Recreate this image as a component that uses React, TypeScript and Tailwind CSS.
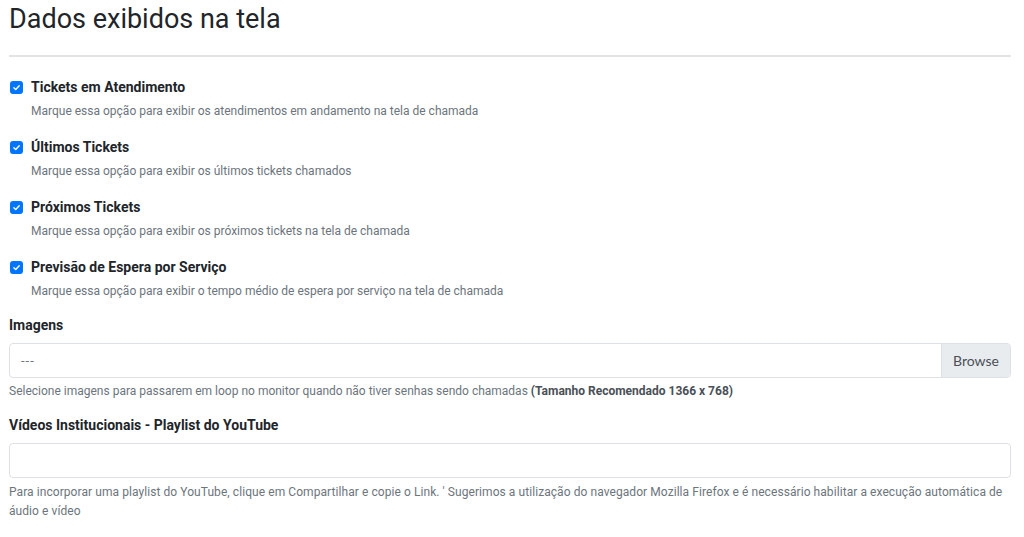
import { useState } from "react";

const opcoes = [
  {
    id: "atendimento",
    label: "Tickets em Atendimento",
    help: "Marque essa opção para exibir os atendimentos em andamento na tela de chamada",
  },
  {
    id: "ultimos",
    label: "Últimos Tickets",
    help: "Marque essa opção para exibir os últimos tickets chamados",
  },
  {
    id: "proximos",
    label: "Próximos Tickets",
    help: "Marque essa opção para exibir os próximos tickets na tela de chamada",
  },
  {
    id: "previsao",
    label: "Previsão de Espera por Serviço",
    help: "Marque essa opção para exibir o tempo médio de espera por serviço na tela de chamada",
  },
];

function Check({ checked, onChange }: { checked: boolean; onChange: () => void }) {
  return (
    <button
      type="button"
      onClick={onChange}
      className={`flex h-[13px] w-[13px] shrink-0 items-center justify-center rounded-[3px] ${
        checked ? "bg-[#0075ff]" : "border border-gray-400 bg-white"
      }`}
    >
      {checked && (
        <svg viewBox="0 0 12 12" className="h-[9px] w-[9px]">
          <path d="M2.5 6.2 L5 8.6 L9.6 3.6" fill="none" stroke="white" strokeWidth="1.9" strokeLinecap="round" strokeLinejoin="round" />
        </svg>
      )}
    </button>
  );
}

export default function App() {
  const [marcados, setMarcados] = useState<Record<string, boolean>>({
    atendimento: true,
    ultimos: true,
    proximos: true,
    previsao: true,
  });
  const [playlist, setPlaylist] = useState("");

  return (
    <div className="min-h-[537px] bg-white pl-[9px] pr-[13px] text-[#212529]" style={{ fontFamily: "Roboto, sans-serif" }}>
      <h1 className="pt-[3px] text-[27px] font-normal leading-[33px]">Dados exibidos na tela</h1>
      <hr className="mt-[19px] border-t-2 border-[#e3e3e3]" />

      <div className="mt-[21px] flex flex-col gap-[19px]">
        {opcoes.map((o) => (
          <div key={o.id}>
            <label className="flex items-center gap-[8px] pl-[1px]">
              <Check
                checked={marcados[o.id]}
                onChange={() => setMarcados((prev) => ({ ...prev, [o.id]: !prev[o.id] }))}
              />
              <span className="text-[14px] font-bold leading-[18px]">{o.label}</span>
            </label>
            <p className="mt-[7px] pl-[22px] text-[12px] leading-[16px] text-[#6c757d]">{o.help}</p>
          </div>
        ))}
      </div>

      <div className="mt-[17px]">
        <label className="block text-[14px] font-bold leading-[18px]">Imagens</label>
        <div className="mt-[9px] flex h-[35px] overflow-hidden rounded-[4px] border border-[#dde1e5]">
          <div className="flex flex-1 items-center px-[11px] text-[13px] tracking-[1px] text-[#6c757d]">---</div>
          <button className="border-l border-[#dde1e5] bg-[#e9ecef] px-[11px] text-[14px] text-[#495057]" style={{ fontFamily: "Lato, sans-serif" }}>
            Browse
          </button>
        </div>
        <p className="mt-[5px] text-[12px] leading-[16px] text-[#6c757d]">
          Selecione imagens para passarem em loop no monitor quando não tiver senhas sendo chamadas{" "}
          <b className="font-bold text-[#495057]">(Tamanho Recomendado 1366 x 768)</b>
        </p>
      </div>

      <div className="mt-[17px]">
        <label className="block text-[14px] font-bold leading-[18px]">Vídeos Institucionais - Playlist do YouTube</label>
        <input
          value={playlist}
          onChange={(e) => setPlaylist(e.target.value)}
          className="mt-[9px] block h-[35px] w-full rounded-[4px] border border-[#dde1e5] px-[12px] text-[13px] outline-none"
        />
        <p className="mt-[5px] text-[12px] leading-[19px] tracking-[0.07px] text-[#6c757d]">
          Para incorporar uma playlist do YouTube, clique em Compartilhar e copie o Link. ' Sugerimos a utilização do navegador Mozilla Firefox e é necessário habilitar a execução automática de áudio e vídeo
        </p>
      </div>
    </div>
  );
}
